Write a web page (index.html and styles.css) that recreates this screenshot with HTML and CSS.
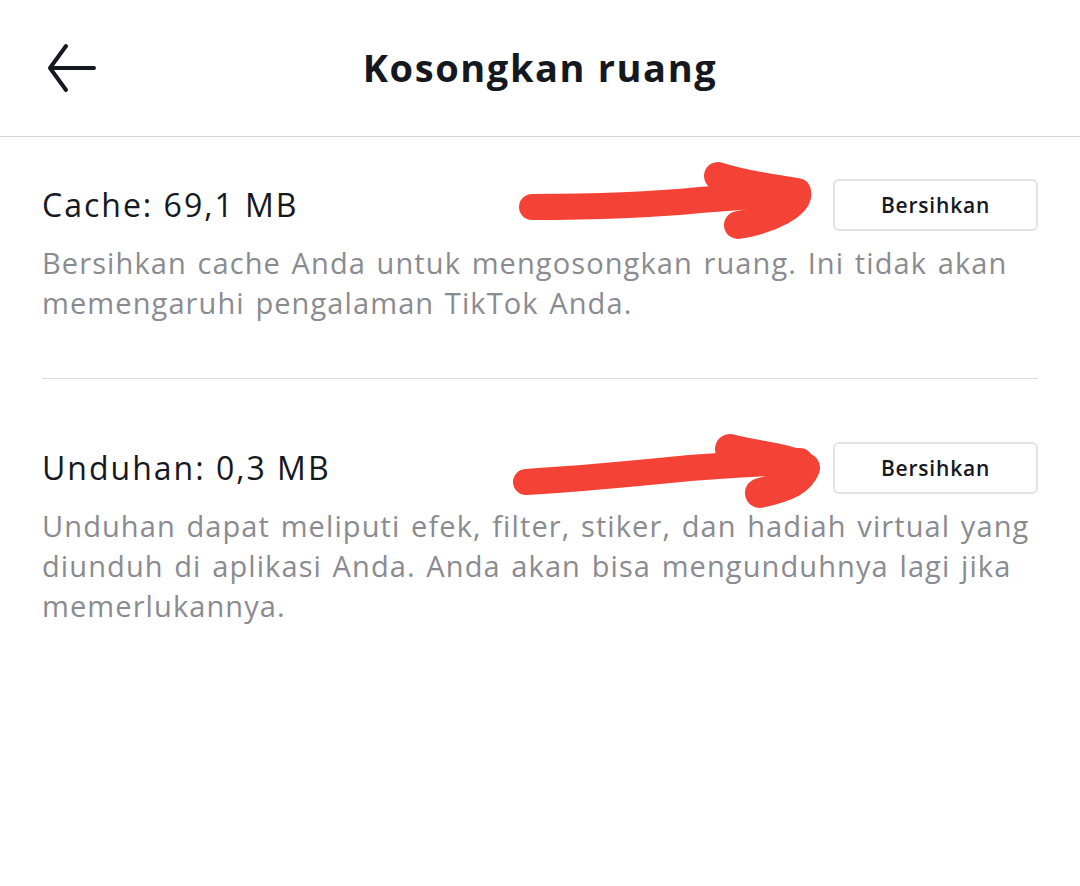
FILE: index.html
```html
<!DOCTYPE html>
<html lang="id">
<head>
<meta charset="utf-8">
<link rel="stylesheet" href="styles.css">
</head>
<body>
<div class="page">
  <header class="header">
    <button class="back" aria-label="Kembali">
      <svg width="52" height="50" viewBox="0 0 52 50"><path d="M49 25H6M21 3L5 25l16 22" fill="none" stroke="#16181f" stroke-width="4" stroke-linecap="round" stroke-linejoin="round"/></svg>
    </button>
    <h1 class="title">Kosongkan ruang</h1>
    <span class="spacer"></span>
  </header>
  <main class="content">
    <section class="item">
      <div class="row">
        <h2 class="label">Cache: 69,1 MB</h2>
        <button class="btn">Bersihkan</button>
      </div>
      <p class="desc">Bersihkan cache Anda untuk mengosongkan ruang. Ini tidak akan memengaruhi pengalaman TikTok Anda.</p>
    </section>
    <hr class="divider">
    <section class="item">
      <div class="row">
        <h2 class="label">Unduhan: 0,3 MB</h2>
        <button class="btn">Bersihkan</button>
      </div>
      <p class="desc">Unduhan dapat meliputi efek, filter, stiker, dan hadiah virtual yang diunduh di aplikasi Anda. Anda akan bisa mengunduhnya lagi jika memerlukannya.</p>
    </section>
  </main>
  <svg class="scribble" width="1080" height="886" viewBox="0 0 1080 886">
    <g fill="none" stroke="#f44336" stroke-linecap="round" stroke-linejoin="round">
      <path d="M532 207 C600 207 650 205 700 200 C740 197 770 195 795 193" stroke-width="26"/>
      <path d="M718 176 C750 186 775 188 797 192 C800 205 770 220 738 225" stroke-width="28"/>
      <path d="M526 482 C590 478 640 473 690 468 C730 465 770 463 800 461" stroke-width="26"/>
      <path d="M730 449 C760 457 785 457 805 468 C800 480 790 486 760 493" stroke-width="30"/>
    </g>
  </svg>
</div>
</body>
</html>
```
FILE: styles.css
```css
* { box-sizing: border-box; }
html, body { margin: 0; padding: 0; background: #fff; }
body { font-family: "Open Sans", "Liberation Sans", sans-serif; color: #16181f; }
.page { position: relative; width: 1080px; height: 886px; overflow: hidden; }
.header {
  height: 137px;
  border-bottom: 1px solid #d6d6d8;
  display: flex;
  align-items: center;
  padding: 0 42px 0 45px;
}
.back { background: none; border: 0; padding: 0; width: 57px; height: 50px; display: flex; align-items: center; margin-top: -1px; }
.spacer { width: 60px; }
.title {
  flex: 1;
  text-align: center;
  margin: 0;
  font-size: 38px;
  font-weight: 700;
  letter-spacing: 1.6px;
  margin-top: -2px;
}
.content { padding: 0 42px; }
.item { padding-top: 42px; }
.row { display: flex; align-items: center; justify-content: space-between; }
.label { margin: 0; font-size: 32px; font-weight: 400; line-height: 52px; letter-spacing: 2px; }
.btn {
  width: 205px;
  height: 52px;
  border: 2px solid #e3e3e5;
  border-radius: 6px;
  background: #fff;
  font-family: inherit;
  font-size: 21px;
  font-weight: 600;
  letter-spacing: 0.8px;
  color: #16181f;
}
.desc {
  margin: 12px 0 0;
  font-size: 29px;
  line-height: 40px;
  letter-spacing: 1.1px;
  word-spacing: 2px;
  color: #8a8b91;
}
.divider { margin: 55px 0 0; border: 0; border-top: 1px solid #dcdcde; }
.item + .divider + .item { padding-top: 63px; }
.scribble { position: absolute; left: 0; top: 0; pointer-events: none; }
```
